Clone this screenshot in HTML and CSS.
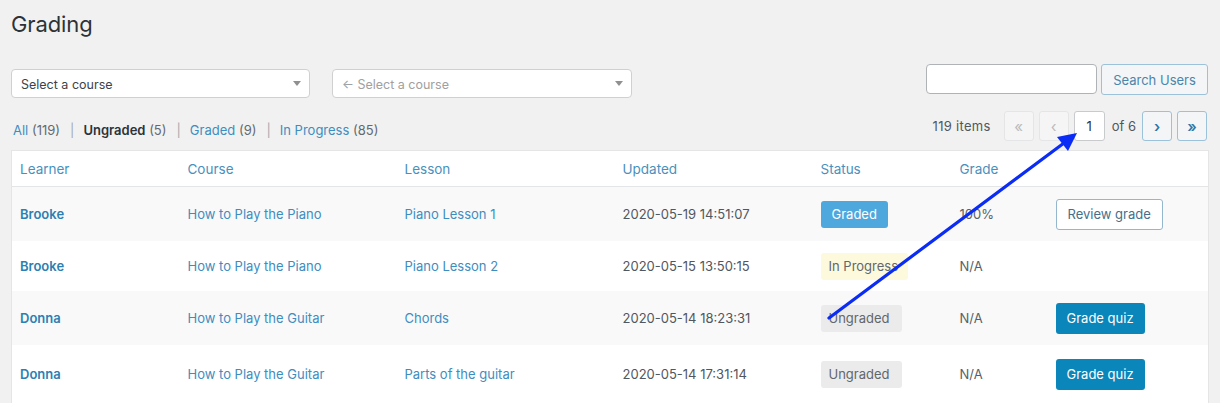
FILE: index.html
```html
<!DOCTYPE html>
<html>
<head>
<meta charset="utf-8">
<link rel="stylesheet" href="styles.css">
</head>
<body>
<div class="wrap">
  <h1 class="title">Grading</h1>

  <div class="filters">
    <div class="selects">
      <div class="select"><span>Select a course</span><span class="caret"></span></div>
      <div class="select placeholder"><span>← Select a course</span><span class="caret"></span></div>
    </div>
    <div class="search">
      <div class="search-input"></div>
      <div class="btn-secondary">Search Users</div>
    </div>
  </div>

  <div class="navrow">
    <div class="subsubsub">
      <a class="link">All</a> <span class="count">(119)</span><span class="sep">|</span><b class="current">Ungraded</b> <span class="count">(5)</span><span class="sep">|</span><a class="link">Graded</a> <span class="count">(9)</span><span class="sep">|</span><a class="link">In Progress</a> <span class="count">(85)</span>
    </div>
    <div class="pagination">
      <span class="items">119 items</span>
      <span class="pbtn disabled">«</span>
      <span class="pbtn disabled">‹</span>
      <span class="pinput">1</span>
      <span class="of">of 6</span>
      <span class="pbtn">›</span>
      <span class="pbtn">»</span>
    </div>
  </div>

  <table class="grid">
    <colgroup>
      <col style="width:168px"><col style="width:217px"><col style="width:218px"><col style="width:198px"><col style="width:139px"><col style="width:96px"><col style="width:161px">
    </colgroup>
    <thead>
      <tr><th>Learner</th><th>Course</th><th>Lesson</th><th>Updated</th><th>Status</th><th>Grade</th><th></th></tr>
    </thead>
    <tbody>
      <tr class="alt tall">
        <td><a class="learner">Brooke</a></td>
        <td><a class="link">How to Play the Piano</a></td>
        <td><a class="link">Piano Lesson 1</a></td>
        <td class="date">2020-05-19 14:51:07</td>
        <td><span class="badge graded">Graded</span></td>
        <td class="grade">100%</td>
        <td><span class="btn-outline">Review grade</span></td>
      </tr>
      <tr class="short">
        <td><a class="learner">Brooke</a></td>
        <td><a class="link">How to Play the Piano</a></td>
        <td><a class="link">Piano Lesson 2</a></td>
        <td class="date">2020-05-15 13:50:15</td>
        <td><span class="badge progress">In Progress</span></td>
        <td class="grade">N/A</td>
        <td></td>
      </tr>
      <tr class="alt tall">
        <td><a class="learner">Donna</a></td>
        <td><a class="link">How to Play the Guitar</a></td>
        <td><a class="link">Chords</a></td>
        <td class="date">2020-05-14 18:23:31</td>
        <td><span class="badge ungraded">Ungraded</span></td>
        <td class="grade">N/A</td>
        <td><span class="btn-primary">Grade quiz</span></td>
      </tr>
      <tr class="tall last">
        <td><a class="learner">Donna</a></td>
        <td><a class="link">How to Play the Guitar</a></td>
        <td><a class="link">Parts of the guitar</a></td>
        <td class="date">2020-05-14 17:31:14</td>
        <td><span class="badge ungraded">Ungraded</span></td>
        <td class="grade">N/A</td>
        <td><span class="btn-primary">Grade quiz</span></td>
      </tr>
    </tbody>
  </table>
</div>

<svg class="arrow" width="1220" height="403" viewBox="0 0 1220 403">
  <line x1="829" y1="318" x2="1064" y2="143" stroke="#0a2cf5" stroke-width="3.2" stroke-linecap="round"/>
  <polygon points="1077,133 1068,151 1057,137" fill="#0a2cf5"/>
</svg>
</body>
</html>
```

FILE: styles.css
```css
html, body {
  margin: 0;
  padding: 0;
  background: #f1f1f1;
  font-family: Inter, "Noto Sans", "Liberation Sans", sans-serif;
  font-size: 13px;
  color: #50575e;
  overflow: hidden;
}

.wrap {
  padding: 0 12px 0 11px;
}

.title {
  margin: 0;
  padding-top: 10px;
  font-size: 22px;
  line-height: 29px;
  font-weight: 400;
  color: #2c3338;
  letter-spacing: -0.1px;
}

.filters {
  display: flex;
  justify-content: space-between;
  margin-top: 25px;
  height: 31px;
}

.selects {
  display: flex;
  gap: 22px;
  padding-top: 5px;
}

.select {
  box-sizing: border-box;
  width: 299px;
  height: 29px;
  background: #fff;
  border: 1px solid #d0d0d0;
  border-radius: 4px;
  display: flex;
  align-items: center;
  justify-content: space-between;
  padding: 2px 8px 0 9px;
  color: #3c434a;
  font-size: 12.5px;
}

.select + .select { width: 300px; }

.select.placeholder { color: #a0a0a0; }

.caret {
  width: 0;
  height: 0;
  margin-top: -2px;
  border-left: 4px solid transparent;
  border-right: 4px solid transparent;
  border-top: 5px solid #909090;
}

.search {
  display: flex;
  gap: 4px;
}

.search-input {
  box-sizing: border-box;
  width: 171px;
  height: 30px;
  background: #fff;
  border: 1px solid #b0b3b6;
  border-radius: 4px;
}

.btn-secondary {
  box-sizing: border-box;
  width: 107px;
  height: 31px;
  border: 1px solid #9cc2da;
  border-radius: 3px;
  background: #f3f5f6;
  color: #4a86ac;
  display: flex;
  align-items: center;
  justify-content: center;
  font-size: 13px;
}

.navrow {
  display: flex;
  justify-content: space-between;
  align-items: flex-end;
  margin-top: 15px;
  height: 31px;
}

.subsubsub {
  padding: 0 0 3px 2px;
  font-size: 13px;
  color: #646970;
  line-height: 16px;
}

.subsubsub .link { color: #3e8dc0; }
.subsubsub .current { color: #2c3338; font-weight: 600; }
.subsubsub .sep { color: #a7aaad; padding: 0 9px 0 10px; }

.pagination {
  display: flex;
  align-items: center;
  gap: 5px;
  padding-right: 1px;
}

.items {
  color: #50575e;
  margin-right: 8px;
  font-size: 13px;
  letter-spacing: 0.3px;
}

.pbtn {
  box-sizing: border-box;
  width: 30px;
  height: 30px;
  border: 1px solid #9cc2da;
  border-radius: 3px;
  background: #f3f5f6;
  color: #2f77a6;
  display: flex;
  align-items: center;
  justify-content: center;
  font-size: 15px;
  font-weight: 600;
}

.pbtn.disabled {
  border-color: #e4e5e7;
  background: #f5f5f5;
  color: #b8bbbe;
  font-weight: 400;
}

.pinput {
  box-sizing: border-box;
  width: 31px;
  height: 30px;
  border: 1px solid #c9cacc;
  border-radius: 3px;
  background: #fff;
  display: flex;
  align-items: center;
  justify-content: center;
  color: #2c3338;
}

.of {
  color: #50575e;
  margin: 0 1px 0 2px;
}

.grid {
  margin-top: 9px;
  width: 1197px;
  table-layout: fixed;
  border-collapse: collapse;
  border: 1px solid #e4e5e7;
  border-bottom: 0;
  background: #fff;
}

.grid th {
  text-align: left;
  font-weight: 400;
  font-size: 13.5px;
  color: #4a90bd;
  height: 35px;
  padding: 0 9px 0 8px;
  border-bottom: 1px solid #e4e5e7;
}

.grid td {
  padding: 0 9px 0 8px;
  white-space: nowrap;
}

.grid tr.tall td { height: 54px; }
.grid tr.short td { height: 50px; }
.grid tr.last td { height: 58px; }
.grid tr.alt td { background: #f9f9f9; }

.learner {
  font-weight: 600;
  color: #2d7fb2;
}

.link { color: #3e8dc0; }

.date { color: #50575e; }
.grade { color: #5a6066; }

.badge {
  display: inline-block;
  height: 27px;
  line-height: 27px;
  padding: 0 11px;
  border-radius: 3px;
}

.badge.graded { background: #4ea8de; color: #fff; }
.badge.progress { background: #fcf9dd; color: #62676c; padding: 0 10px 0 8px; }
.badge.ungraded { background: #ebebeb; color: #62676c; padding: 0 12px 0 8px; }

.btn-outline {
  display: inline-block;
  box-sizing: border-box;
  height: 31px;
  line-height: 29px;
  padding: 0 11px;
  border: 1px solid #95b7ce;
  border-radius: 3px;
  background: #fff;
  color: #456f8c;
}

.btn-primary {
  display: inline-block;
  box-sizing: border-box;
  height: 31px;
  line-height: 31px;
  padding: 0 11px;
  border-radius: 3px;
  background: #0b86ba;
  color: #fff;
}

.arrow {
  position: absolute;
  left: 0;
  top: 0;
  pointer-events: none;
}
```
